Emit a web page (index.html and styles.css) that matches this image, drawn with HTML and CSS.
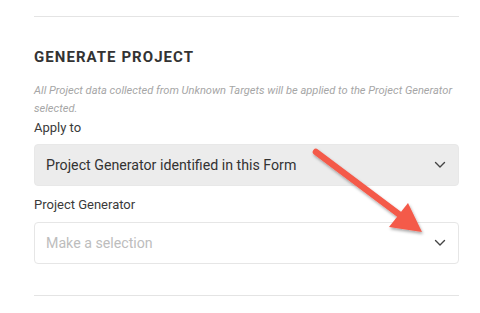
FILE: index.html
```html
<!DOCTYPE html>
<html>
<head>
<meta charset="utf-8">
<link rel="stylesheet" href="styles.css">
</head>
<body>
<div class="panel">
  <div class="rule top"></div>
  <h2 class="title">GENERATE PROJECT</h2>
  <p class="desc">All Project data collected from Unknown Targets will be applied to the Project Generator selected.</p>
  <div class="field">
    <div class="label">Apply to</div>
    <div class="select filled">
      <span class="value">Project Generator identified in this Form</span>
      <svg class="chev" width="12" height="8" viewBox="0 0 12 8"><path d="M1.5 1.5 L6 6 L10.5 1.5" fill="none" stroke="#444" stroke-width="1.4" stroke-linecap="round" stroke-linejoin="round"/></svg>
    </div>
  </div>
  <div class="field second">
    <div class="label">Project Generator</div>
    <div class="select empty">
      <span class="placeholder">Make a selection</span>
      <svg class="chev" width="12" height="8" viewBox="0 0 12 8"><path d="M1.5 1.5 L6 6 L10.5 1.5" fill="none" stroke="#444" stroke-width="1.4" stroke-linecap="round" stroke-linejoin="round"/></svg>
    </div>
  </div>
  <div class="rule bottom"></div>
</div>
<svg class="arrow" width="480" height="313" viewBox="0 0 480 313">
  <defs>
    <filter id="sh" x="-20%" y="-20%" width="140%" height="140%">
      <feDropShadow dx="1" dy="2" stdDeviation="1.5" flood-color="#000" flood-opacity="0.35"/>
    </filter>
  </defs>
  <g filter="url(#sh)" fill="#f45a4a">
    <line x1="316" y1="152" x2="400" y2="215" stroke="#f45a4a" stroke-width="6.5" stroke-linecap="round"/>
    <polygon points="422,232 389,227 408,203"/>
  </g>
</svg>
</body>
</html>
```
FILE: styles.css
```css
html, body {
  margin: 0;
  padding: 0;
  background: #ffffff;
}
body {
  width: 480px;
  height: 313px;
  overflow: hidden;
  position: relative;
  font-family: Roboto, "Liberation Sans", sans-serif;
}
.panel {
  padding: 16px 21px 0 34px;
  display: flex;
  flex-direction: column;
}
.rule {
  height: 1px;
  background: #e4e4e4;
}
.title {
  margin: 31px 0 0 0;
  font-family: Roboto, "Liberation Sans", sans-serif;
  font-weight: 700;
  font-size: 15px;
  letter-spacing: 1.05px;
  line-height: 18px;
  color: #333333;
}
.desc {
  margin: 16px 0 0 0;
  font-size: 11.1px;
  font-style: italic;
  line-height: 18px;
  color: #a6a6a6;
}
.field {
  display: flex;
  flex-direction: column;
  margin-top: 1px;
}
.field.second {
  margin-top: 10px;
}
.label {
  font-size: 13px;
  line-height: 18px;
  color: #3a3a3a;
}
.select {
  margin-top: 7px;
  height: 42px;
  box-sizing: border-box;
  border-radius: 4px;
  display: flex;
  align-items: center;
  justify-content: space-between;
  padding: 0 12px 0 11px;
  font-size: 14.2px;
}
.select.filled {
  background: #ececec;
  border: 1px solid #e8e8e8;
  color: #333333;
}
.select.empty {
  background: #ffffff;
  border: 1px solid #e6e6e6;
  height: 42px;
  margin-top: 8px;
}
.placeholder {
  color: #bdbdbd;
}
.chev {
  display: block;
}
.rule.bottom {
  margin-top: 31px;
}
.arrow {
  position: absolute;
  left: 0;
  top: 0;
  pointer-events: none;
}
```
